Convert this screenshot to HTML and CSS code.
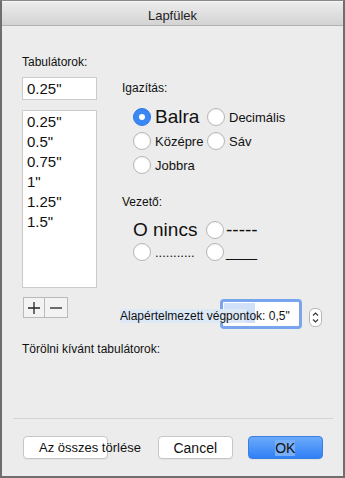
FILE: index.html
```html
<!DOCTYPE html>
<html lang="hu">
<head>
  <meta charset="UTF-8" />
  <meta name="viewport" content="width=device-width, initial-scale=1.0"/>
  <title>Lapfülek</title>
  <link rel="stylesheet" href="styles.css">
</head>
<body>

<div class="window">
  <div class="titlebar">Lapfülek</div>

  <div class="content">
    <div class="top">
      <!-- tab stop list -->
      <div class="tabs-col">
        <p class="label">Tabulátorok:</p>
        <div class="tab-input">0.25"</div>
        <ul class="tab-list">
          <li>0.25"</li>
          <li>0.5"</li>
          <li>0.75"</li>
          <li>1"</li>
          <li>1.25"</li>
          <li>1.5"</li>
        </ul>
        <div class="plus-minus">
          <button class="pm-btn" aria-label="Hozzáadás">
            <svg width="14" height="14" viewBox="0 0 14 14"><path d="M7 1v12M1 7h12" stroke="#222" stroke-width="1.3"/></svg>
          </button>
          <button class="pm-btn" aria-label="Eltávolítás">
            <svg width="14" height="14" viewBox="0 0 14 14"><path d="M1 7h12" stroke="#222" stroke-width="1.3"/></svg>
          </button>
        </div>
      </div>

      <!-- options -->
      <div class="opts-col">
        <p class="label label-align">Igazítás:</p>
        <div class="radio-grid">
          <div class="opt"><span class="radio checked"></span><span class="big">Balra</span></div>
          <div class="opt"><span class="radio"></span><span>Decimális</span></div>
          <div class="opt"><span class="radio"></span><span>Középre</span></div>
          <div class="opt"><span class="radio"></span><span>Sáv</span></div>
          <div class="opt"><span class="radio"></span><span>Jobbra</span></div>
        </div>

        <p class="label label-leader">Vezető:</p>
        <div class="leader-grid">
          <div class="opt"><span class="big">O nincs</span></div>
          <div class="opt tight"><span class="radio"></span><span class="dashes">-----</span></div>
          <div class="opt"><span class="radio"></span><span>...........</span></div>
          <div class="opt tight"><span class="radio"></span><span class="under">____</span></div>
        </div>

        <div class="default-row">
          <div class="focus-box"><span class="sel"></span></div>
          <span class="default-label"><span class="hl">Alapértelmezett végpon</span>tok: 0,5"</span>
          <svg class="stepper" width="13" height="19" viewBox="0 0 13 19">
            <rect x="0.5" y="0.5" width="12" height="18" rx="5" fill="#fff" stroke="#b3b3b3"/>
            <path d="M4 7.5l2.5-2.5 2.5 2.5M4 11.5l2.5 2.5 2.5-2.5" fill="none" stroke="#333" stroke-width="1.1"/>
          </svg>
        </div>
      </div>
    </div>

    <p class="label label-clear">Törölni kívánt tabulátorok:</p>

    <div class="separator"></div>

    <div class="buttons">
      <button class="btn btn-clear">Az összes törlése</button>
      <button class="btn btn-cancel">Cancel</button>
      <button class="btn btn-ok"><span>OK</span></button>
    </div>
  </div>
</div>

</body>
</html>
```

FILE: styles.css
```css
* { box-sizing: border-box; margin: 0; padding: 0; font-family: 'Liberation Sans', Arial, sans-serif; }
body { background-color: #ececec; color: #111; }

.window { width: 345px; height: 478px; background-color: #ececec; border: 2px solid #6e6e6e; border-top: 1px solid #8a8a8a; }
.titlebar { height: 25px; padding-top: 3px; line-height: 21px; font-size: 13px; text-align: center; color: #222; background: linear-gradient(#ececec, #d3d3d3); border-top: 1px solid #f7f7f7; border-bottom: 1px solid #b2b2b2; }

.content { padding: 29px 20px 0 20px; }
.label { font-size: 12px; line-height: 14px; color: #111; }

.top { display: flex; }
.tabs-col { width: 75px; }
.tab-input { margin-top: 8px; height: 23px; background: #fff; border: 1px solid #cbcbcb; font-size: 15px; line-height: 21px; padding-left: 4px; }
.tab-list { margin-top: 10px; height: 178px; list-style: none; background: #fff; border: 1px solid #cbcbcb; padding: 1px 0 0 4px; }
.tab-list li { font-size: 15px; line-height: 20px; }
.plus-minus { display: flex; margin-top: 9px; margin-left: 1px; }
.pm-btn { width: 22px; height: 21px; display: flex; align-items: center; justify-content: center; background: #f3f3f3; border: 1px solid #b9b9b9; }
.pm-btn + .pm-btn { width: 23px; border-left: none; }

.opts-col { margin-left: 25px; flex: 1; }
.label-align { margin-top: 26px; }
.radio-grid { margin-top: 10px; padding-left: 11px; display: grid; grid-template-columns: 74px auto; grid-auto-rows: 24px; }
.opt { display: flex; align-items: center; gap: 4px; font-size: 13px; }
.opt.tight { gap: 2px; }
.big { font-size: 19px; }
.radio { width: 18px; height: 18px; border-radius: 50%; background: #fff; border: 1px solid #b6b6b6; box-shadow: inset 0 1px 1px rgba(0,0,0,0.05); flex-shrink: 0; }
.radio.checked { background: #3a88f6; border-color: #2f7ae6; position: relative; }
.radio.checked::after { content: ""; position: absolute; left: 5px; top: 5px; width: 6px; height: 6px; border-radius: 50%; background: #fff; }

.label-leader { margin-top: 18px; }
.leader-grid { margin-top: 10px; padding-left: 11px; display: grid; grid-template-columns: 73px auto; grid-auto-rows: 22px; }
.dashes { font-size: 19px; }
.under { font-size: 14px; }

.default-row { margin-top: 36px; height: 30px; display: flex; position: relative; }
.focus-box { margin-left: 98px; width: 82px; height: 30px; background: #fff; border: 3px solid #78a5ee; border-radius: 4px; padding: 1px 0 0 1px; }
.sel { display: block; width: 31px; height: 20px; background: #cfe0f8; }
.default-label { position: absolute; left: -2px; top: 11px; font-size: 12px; line-height: 13px; white-space: nowrap; }
.hl { background: #dde8f7; }
.stepper { margin: 9px 0 0 7px; }

.label-clear { margin-top: 13px; }
.separator { margin: 62px -10px 0 -9px; height: 1px; background: #d4d4d4; }

.buttons { display: flex; margin-top: 17px; }
.btn { height: 23px; font-size: 13px; background: #fff; border: 1px solid #c6c6c6; border-radius: 4px; color: #111; box-shadow: 0 1px 0 rgba(0,0,0,0.04); }
.btn-clear { margin-left: 1px; width: 85px; text-align: left; padding-left: 15px; white-space: nowrap; overflow: visible; }
.btn-cancel { margin-left: 50px; width: 75px; font-size: 14px; }
.btn-ok { margin-left: 15px; width: 76px; font-size: 14px; background: linear-gradient(#6caafa, #2f80f6); border-color: #3a7fe6; }
.btn-ok span { background: #78aef7; }
```
